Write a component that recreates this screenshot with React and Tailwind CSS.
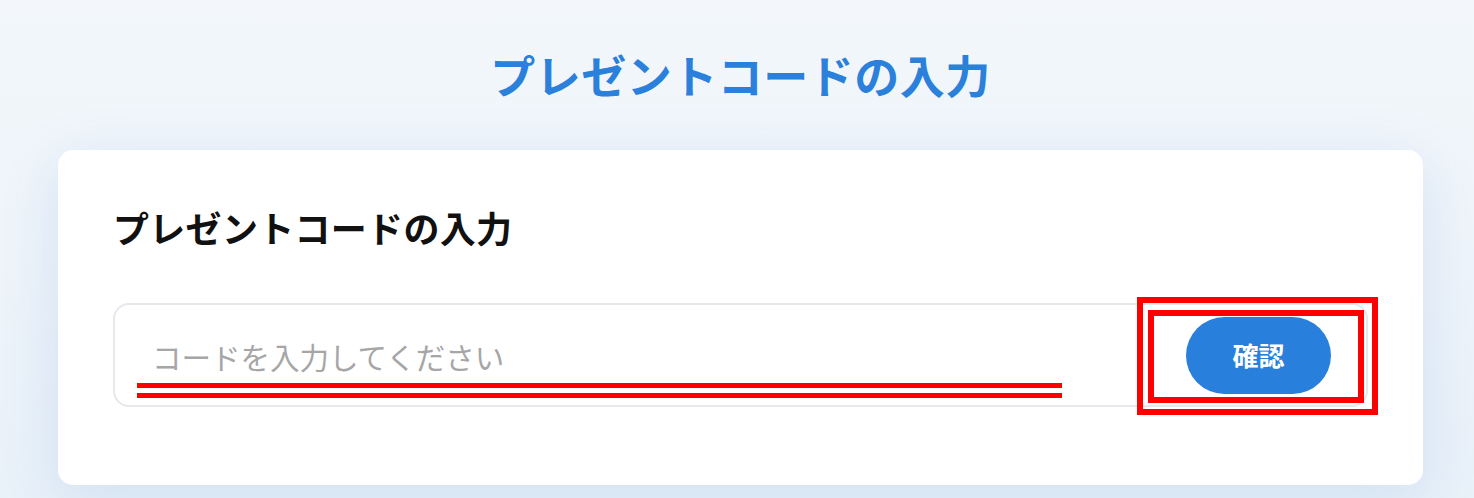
import React from "react";

export default function App() {
  const font = { fontFamily: '"Noto Sans CJK JP", "Noto Sans", sans-serif' };
  return (
    <div
      className="relative w-[1474px] h-[498px] overflow-hidden bg-gradient-to-b from-[#f3f7fb] to-[#e9f1f9] pl-[58px] pr-[51px]"
      style={font}
    >
      <div className="h-[150px] flex justify-center pt-[52px]">
        <h1 className="text-[45px] leading-none font-bold text-[#2a80db] tracking-[0.5px]">
          プレゼントコードの入力
        </h1>
      </div>
      <div className="h-[335px] bg-white rounded-[15px] shadow-[0_12px_60px_rgba(40,110,200,0.13)] px-[55px] pt-[59px]">
        <h2 className="text-[36px] leading-none font-bold text-[#111111] tracking-[0.3px]">
          プレゼントコードの入力
        </h2>
        <div className="mt-[58px] h-[104px] rounded-[16px] border-2 border-[#e6e8ec] flex items-center pl-[37px] pr-[35px]">
          <span className="flex-1 text-[29.5px] text-[#a6a6a6] leading-none pt-[4px]">
            コードを入力してください
          </span>
          <button className="w-[145px] h-[77px] rounded-full bg-[#2880dc] text-white text-[26px] font-bold leading-none">
            確認
          </button>
        </div>
      </div>

      <div className="absolute left-[137px] top-[383px] w-[925px] h-[5px] bg-[#ff0000]" />
      <div className="absolute left-[137px] top-[393px] w-[925px] h-[5px] bg-[#ff0000]" />
      <div className="absolute left-[1137px] top-[297px] w-[241px] h-[118px] border-[6px] border-[#ff0000]" />
      <div className="absolute left-[1148px] top-[310px] w-[216px] h-[93px] border-[6px] border-[#ff0000]" />
    </div>
  );
}
